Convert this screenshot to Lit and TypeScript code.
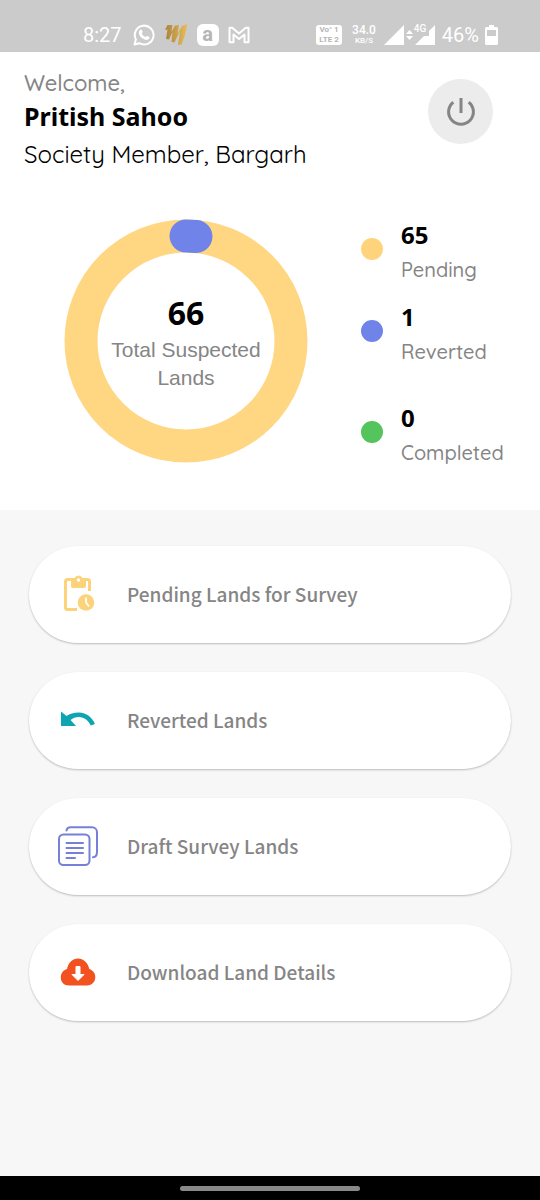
import { LitElement, html, css, svg } from "lit";
import { customElement } from "lit/decorators.js";

interface Stat { value: number; label: string; tone: string }

const STATS: Stat[] = [
  { value: 65, label: "Pending", tone: "pending" },
  { value: 1, label: "Reverted", tone: "reverted" },
  { value: 0, label: "Completed", tone: "completed" },
];

const clipboardIcon = html`<svg class="icon" viewBox="0 0 40 40" aria-hidden="true">
  <path d="M19 35.500H9.500a2 2 0 0 1-2-2V7.500a2 2 0 0 1 2-2h20a2 2 0 0 1 2 2V17" fill="none" stroke="#fcd27b" stroke-width="3"/>
  <path d="M13 4h3.500a4.400 4.400 0 0 1 8 0H28v8a2 2 0 0 1-2 2H15a2 2 0 0 1-2-2z" fill="#fcd27b"/>
  <circle cx="20.500" cy="6" r="1.700" fill="#fff"/>
  <circle cx="28" cy="28.500" r="8.300" fill="#fcd27b"/>
  <path d="M28 23.500v5l3 4" fill="none" stroke="#fff" stroke-width="1.800"/>
</svg>`;

const undoIcon = html`<svg class="icon" viewBox="0 0 40 40" aria-hidden="true">
  <path d="M3 11.500l5.500 4.600C11.500 13.800 16 12.500 20.800 12.500c7.800 0 13.300 5 16.200 11.400l-4.200 1.700C30.500 20.800 26.500 17 20.800 17c-3.200 0-6 1.200-8.200 3.100L18 26H3z" fill="#0ea5b3"/>
</svg>`;

const draftIcon = html`<svg class="icon" viewBox="0 0 40 40" aria-hidden="true">
  <g fill="none" stroke="#7680d8" stroke-width="2" stroke-linecap="round">
    <rect x="1" y="8.500" width="30.500" height="30.500" rx="4.500"/>
    <path d="M8.500 4.500C8.900 2.300 10.500 1.200 12.500 1.200H34a5 5 0 0 1 5 5V26c0 3-1.500 5-4 5.300"/>
    <path d="M8.500 17H25M8.500 22H25M8.500 27H25M8.500 32H17"/>
  </g>
</svg>`;

const cloudIcon = html`<svg class="icon" viewBox="0 0 40 40" aria-hidden="true">
  <path d="M11 33.500C6 33.500 2.800 30 2.800 25.500c0-4.200 2.500-7.300 6.200-8.400C10.200 11 14.500 6.500 20 6.500s10 4.200 11.300 10.600c3.500 1.100 6 4.200 6 8 0 4.900-3.300 8.400-8.300 8.400z" fill="#f1521f"/>
  <path d="M18 14.500h4v8h4L20 28.500l-6-6h4z" fill="#fff" stroke="#fff" stroke-width="1" stroke-linejoin="round"/>
</svg>`;

const MENU = [
  { label: "Pending Lands for Survey", icon: clipboardIcon },
  { label: "Reverted Lands", icon: undoIcon },
  { label: "Draft Survey Lands", icon: draftIcon },
  { label: "Download Land Details", icon: cloudIcon },
];

@customElement("status-bar")
export class StatusBar extends LitElement {
  static styles = css`
    :host {
      display: flex;
      align-items: center;
      justify-content: space-between;
      height: 52px;
      padding: 18px 42px 0 83px;
      box-sizing: border-box;
      background: #cbcbcb;
      color: #fff;
      font-family: Roboto, "Noto Sans", sans-serif;
    }
    .group { display: flex; align-items: center; height: 34px; }
    .left { gap: 9px; }
    .right { gap: 6px; }
    .clock, .percent { font-size: 20px; line-height: 24px; }
    .clock { margin-right: 2px; }
    svg { display: block; }
    .app {
      width: 22px; height: 22px; border-radius: 6px; background: #fff; color: #b5b5b5;
      font-size: 20px; font-weight: 700; line-height: 20px; text-align: center;
    }
    .volte {
      display: grid; width: 26px; height: 20px; margin-right: 4px; border-radius: 3px;
      background: #fff; color: #b5b5b5;
      font-size: 8px; line-height: 10px; font-weight: 700; text-align: center; align-content: center;
    }
    .speed { display: grid; margin-right: 2px; text-align: center; font-weight: 500; }
    .rate { font-size: 12px; line-height: 12px; }
    .unit { font-size: 8px; line-height: 10px; }
    .signals { position: relative; display: flex; align-items: center; gap: 2px; }
    .network { position: absolute; top: -2px; left: 30px; font-size: 10px; line-height: 12px; font-weight: 500; }
  `;

  render() {
    return html`
      <div class="group left">
        <span class="clock">8:27</span>
        <svg width="22" height="22" viewBox="0 0 22 22" aria-hidden="true">
          <path d="M1.500 20.500l1.400-5A9.400 9.400 0 1 1 6.500 19.200z" fill="none" stroke="#fff" stroke-width="2" stroke-linejoin="round"/>
          <path d="M7.300 5.800c.5-.5 1.200-.4 1.500.2l.8 1.800c.2.500-.6 1.200-.9 1.600 1 1.900 2.200 2.900 4 3.700.5-.5 1-1.400 1.500-1.200l1.900.9c.7.400.4 1.400 0 2-1.500 1.800-4.200 1.200-6.300-.2-1.800-1.200-3.200-3-3.800-4.900-.4-1.500.2-3 1.300-3.900z" fill="#fff"/>
        </svg>
        <svg width="24" height="22" viewBox="0 0 24 22" aria-hidden="true">
          <defs><linearGradient id="gold"><stop offset="0" stop-color="#a9833d"/><stop offset="1" stop-color="#e8bd58"/></linearGradient></defs>
          <path d="M3.500 1L1 6l2.500-.5L2 15l3 .5L8.500 8 7.500 18l3 .5L16 7l-2 14 3.500-.5 3-8L23.500 0 18 2l-4.500 8L15 1l-4 .5L7.500 8 8.500 1z" fill="url(#gold)"/>
        </svg>
        <span class="app">a</span>
        <svg width="22" height="18" viewBox="0 0 22 18" aria-hidden="true">
          <path d="M1.500 1.800v14.400h4V8.500L11 13l5.500-4.500v7.700h4V1.800h-2.700L11 7.500 4.200 1.800z" fill="none" stroke="#fff" stroke-width="2" stroke-linejoin="round"/>
        </svg>
      </div>
      <div class="group right">
        <span class="volte"><span>Vo° 1</span><span>LTE 2</span></span>
        <span class="speed"><span class="rate">34.0</span><span class="unit">KB/S</span></span>
        <span class="signals">
          <svg width="20" height="20" viewBox="0 0 20 20" aria-hidden="true"><path d="M0 20L20 0v20z" fill="#fff"/></svg>
          <svg width="7" height="12" viewBox="0 0 7 12" aria-hidden="true"><path d="M0 5l3.500-4L7 5zM0 7l3.500 4L7 7z" fill="#fff"/></svg>
          <svg width="21" height="20" viewBox="0 0 21 20" aria-hidden="true"><path d="M0 20L9 11h5V6L20 0v20z" fill="#fff"/></svg>
          <span class="network">4G</span>
        </span>
        <span class="percent">46%</span>
        <svg width="13" height="20" viewBox="0 0 13 20" aria-hidden="true">
          <path d="M4 0h5v2h2.500A1.500 1.500 0 0 1 13 3.500v15a1.500 1.500 0 0 1-1.500 1.500h-10A1.500 1.500 0 0 1 0 18.500v-15A1.500 1.500 0 0 1 1.500 2H4z" fill="#fff"/>
          <path d="M2 5h9v6H2z" fill="#cbcbcb"/>
        </svg>
      </div>
    `;
  }
}

@customElement("donut-chart")
export class DonutChart extends LitElement {
  static styles = css`
    :host { display: grid; width: 244px; flex: none; place-items: center; }
    .ring, .caption { grid-area: 1 / 1; }
    .ring { display: block; width: 100%; }
    .caption { display: grid; justify-items: center; text-align: center; width: 160px; }
    .total { font: 700 32px/46px "Noto Sans", sans-serif; color: #000; }
    .text { font: 21px/28px "Liberation Sans", Arial, sans-serif; color: #858585; }
  `;

  render() {
    const radius = 105;
    const total = STATS.reduce((sum, s) => sum + s.value, 0);
    const angle = (STATS[1].value / total) * 2 * Math.PI;
    const x = 122 + radius * Math.sin(angle);
    const y = 122 - radius * Math.cos(angle);
    return html`
      <svg class="ring" viewBox="0 0 244 244" aria-hidden="true">
        ${svg`<circle cx="122" cy="122" r=${radius} fill="none" stroke="#ffd783" stroke-width="33"/>
        <path d="M122 17A${radius} ${radius} 0 0 1 ${x} ${y}" fill="none" stroke="#7083e9" stroke-width="33" stroke-linecap="round"/>`}
      </svg>
      <div class="caption">
        <span class="total">${total}</span>
        <span class="text">Total Suspected Lands</span>
      </div>
    `;
  }
}

@customElement("app-root")
export class AppRoot extends LitElement {
  static styles = css`
    :host {
      display: flex;
      flex-direction: column;
      min-height: 100vh;
      background: #f7f7f7;
      color: #000;
    }
    .hero { background: #fff; padding-bottom: 40px; }
    .header {
      display: flex; justify-content: space-between; align-items: flex-start;
      padding: 15px 47px 0 24px;
    }
    .person { display: grid; font-family: Quicksand, Lato, sans-serif; }
    .hello { font-size: 22px; line-height: 32px; font-weight: 500; color: #858585; }
    .name { margin: 0; font: 700 25px/34px "Noto Sans", sans-serif; }
    .role { font-size: 24px; line-height: 42px; }
    .power {
      display: grid; place-items: center; width: 65px; height: 65px; margin: 12px 0 0; padding: 0;
      border: 0; border-radius: 50%; background: #ececec; cursor: pointer;
    }
    .summary { display: flex; align-items: flex-start; gap: 53px; padding: 42px 24px 0 64px; }
    .chart { margin-top: 2px; }
    .legend { display: grid; gap: 12px; margin: 0; padding: 0; list-style: none; }
    .stat { display: flex; align-items: flex-start; gap: 18px; }
    .stat.completed { margin-top: 19px; }
    .dot { width: 22px; height: 22px; margin-top: 21px; border-radius: 50%; }
    .pending .dot { background: #ffd37c; }
    .reverted .dot { background: #7083e9; }
    .completed .dot { background: #54c45c; }
    .figures { display: grid; }
    .value { font: 700 24px/36px "Noto Sans", sans-serif; }
    .label { font: 500 20px/34px Quicksand, Lato, sans-serif; color: #858585; }
    .menu { display: grid; gap: 29px; padding: 36px 29px; }
    .card {
      display: flex; align-items: center; gap: 29px; width: 100%; height: 97px; padding: 0 29px 2px;
      border: 0; border-radius: 49px; background: #fff; color: #858585; text-align: left; cursor: pointer;
      box-shadow: 0 1px 2px rgba(0, 0, 0, 0.24);
      font: 500 19px/28px "Noto Sans CJK SC", sans-serif;
    }
    .icon { display: block; width: 40px; height: 40px; flex: none; }
    .navbar {
      display: grid; place-items: center; height: 24px; margin-top: auto; background: #000;
    }
    .handle { width: 180px; height: 5px; border-radius: 3px; background: #888; }
  `;

  render() {
    return html`
      <status-bar></status-bar>
      <section class="hero">
        <header class="header">
          <div class="person">
            <span class="hello">Welcome,</span>
            <h1 class="name">Pritish Sahoo</h1>
            <span class="role">Society Member, Bargarh</span>
          </div>
          <button class="power" type="button" aria-label="Log out">
            <svg width="30" height="30" viewBox="0 0 30 30" aria-hidden="true">
              <path d="M15 1v15M7.300 5.200a12.400 12.400 0 1 0 15.400 0" fill="none" stroke="#858585" stroke-width="3"/>
            </svg>
          </button>
        </header>
        <div class="summary">
          <donut-chart class="chart"></donut-chart>
          <ul class="legend">
            ${STATS.map((s) => html`<li class="stat ${s.tone}">
              <span class="dot"></span>
              <span class="figures"><span class="value">${s.value}</span><span class="label">${s.label}</span></span>
            </li>`)}
          </ul>
        </div>
      </section>
      <nav class="menu">
        ${MENU.map((m) => html`<button class="card" type="button">${m.icon}<span>${m.label}</span></button>`)}
      </nav>
      <div class="navbar"><span class="handle"></span></div>
    `;
  }
}
